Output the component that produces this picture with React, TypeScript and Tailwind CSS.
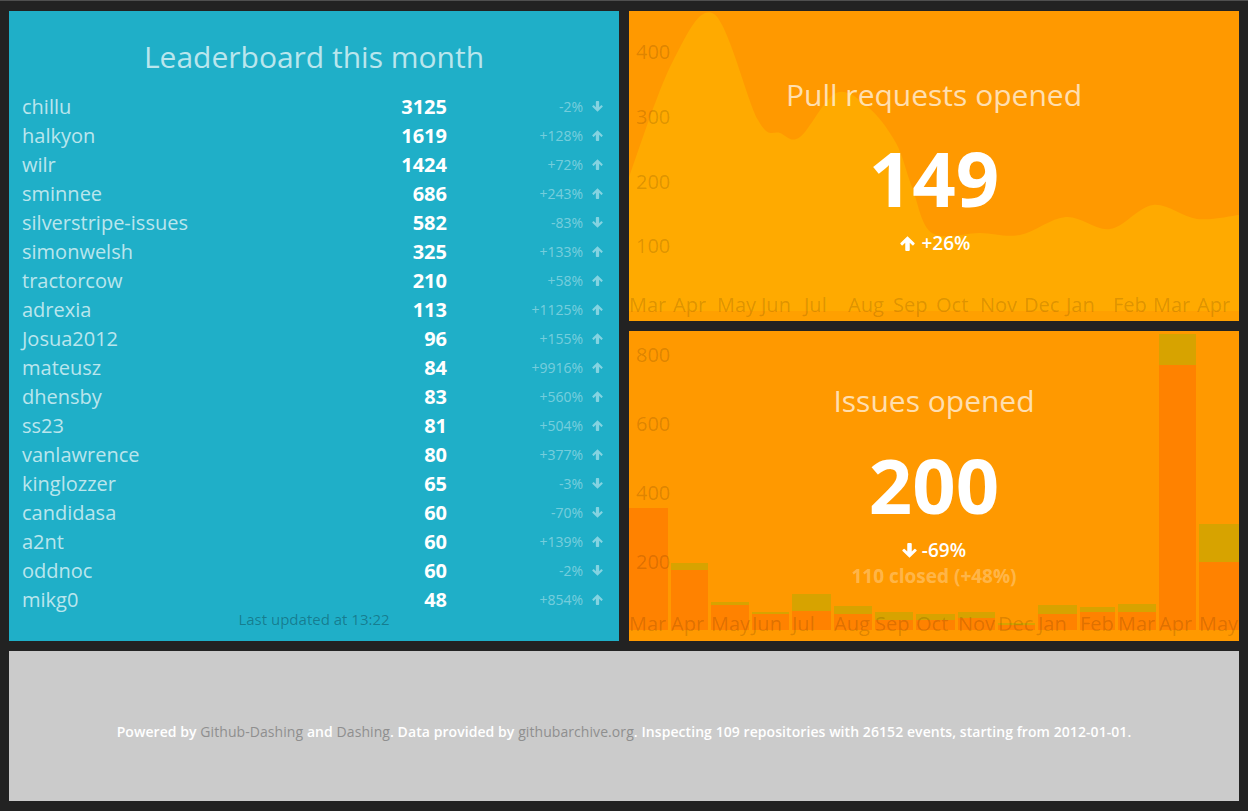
import React from "react";

type Pt = [number, number];

function smoothArea(pts: Pt[], base: number): string {
  let d = `M${pts[0][0]},${pts[0][1]}`;
  for (let i = 0; i < pts.length - 1; i++) {
    const p0 = pts[i - 1] || pts[i];
    const p1 = pts[i];
    const p2 = pts[i + 1];
    const p3 = pts[i + 2] || p2;
    const c1x = p1[0] + (p2[0] - p0[0]) / 6;
    const c1y = p1[1] + (p2[1] - p0[1]) / 6;
    const c2x = p2[0] - (p3[0] - p1[0]) / 6;
    const c2y = p2[1] - (p3[1] - p1[1]) / 6;
    d += ` C${c1x},${c1y} ${c2x},${c2y} ${p2[0]},${p2[1]}`;
  }
  const last = pts[pts.length - 1];
  d += ` L${last[0]},${base} L${pts[0][0]},${base} Z`;
  return d;
}

const pullPts: Pt[] = [
  [0, 166],
  [43, 52],
  [85, 3],
  [129, 109],
  [151, 122],
  [171, 126],
  [207, 82],
  [239, 96],
  [267, 132],
  [283, 176],
  [303, 222],
  [351, 222],
  [391, 224],
  [437, 206],
  [481, 218],
  [524, 194],
  [568, 208],
  [610, 204],
];

const pullX: [string, number][] = [
  ["Mar", 0],
  ["Apr", 44],
  ["May", 88],
  ["Jun", 132],
  ["Jul", 175],
  ["Aug", 219],
  ["Sep", 264],
  ["Oct", 307],
  ["Nov", 351],
  ["Dec", 395],
  ["Jan", 437],
  ["Feb", 484],
  ["Mar", 524],
  ["Apr", 568],
];

const issuesX: [string, number][] = [
  ["Mar", 0],
  ["Apr", 42],
  ["May", 82],
  ["Jun", 123],
  ["Jul", 163],
  ["Aug", 205],
  ["Sep", 246],
  ["Oct", 287],
  ["Nov", 329],
  ["Dec", 369],
  ["Jan", 409],
  ["Feb", 451],
  ["Mar", 489],
  ["Apr", 530],
  ["May", 570],
];

// [x, oliveTop, orangeTop]
const bars: [number, number, number][] = [
  [0, 177, 177],
  [42, 232, 239],
  [82, 271, 274],
  [123, 281, 283],
  [163, 263, 280],
  [205, 275, 283],
  [246, 281, 289],
  [287, 283, 289],
  [329, 281, 287],
  [369, 292, 294],
  [409, 274, 283],
  [451, 276, 281],
  [489, 273, 281],
  [530, 3, 34],
  [570, 193, 231],
];

const rows: [string, number, string, boolean][] = [
  ["chillu", 3125, "-2%", false],
  ["halkyon", 1619, "+128%", true],
  ["wilr", 1424, "+72%", true],
  ["sminnee", 686, "+243%", true],
  ["silverstripe-issues", 582, "-83%", false],
  ["simonwelsh", 325, "+133%", true],
  ["tractorcow", 210, "+58%", true],
  ["adrexia", 113, "+1125%", true],
  ["Josua2012", 96, "+155%", true],
  ["mateusz", 84, "+9916%", true],
  ["dhensby", 83, "+560%", true],
  ["ss23", 81, "+504%", true],
  ["vanlawrence", 80, "+377%", true],
  ["kinglozzer", 65, "-3%", false],
  ["candidasa", 60, "-70%", false],
  ["a2nt", 60, "+139%", true],
  ["oddnoc", 60, "-2%", false],
  ["mikg0", 48, "+854%", true],
];

function Arrow({ up, size, color }: { up: boolean; size: number; color: string }) {
  return (
    <svg
      width={size}
      height={size}
      viewBox="0 0 12 12"
      style={{ transform: up ? undefined : "rotate(180deg)" }}
      className="shrink-0"
    >
      <path
        d="M6 0.2 L11.6 5.6 Q12 6 11.6 6.4 L10.7 7.3 Q10.3 7.7 9.9 7.3 L7.8 5.3 V11.2 Q7.8 12 7 12 H5 Q4.2 12 4.2 11.2 V5.3 L2.1 7.3 Q1.7 7.7 1.3 7.3 L0.4 6.4 Q0 6 0.4 5.6 Z"
        fill={color}
      />
    </svg>
  );
}

const axisFill = "rgba(0,0,0,0.15)";

function Leaderboard() {
  return (
    <div className="row-span-2 bg-[#1fafc8] flex flex-col">
      <h1 className="mt-[28px] text-center text-[30px] leading-[36px] font-normal text-white/70">
        Leaderboard this month
      </h1>
      <ul className="mt-[17px] pl-[13px] pr-[16px]">
        {rows.map(([name, value, pct, up], i) => (
          <li key={i} className="flex h-[29px] items-center">
            <span className="flex-1 text-[20px] leading-[29px] text-white/70">{name}</span>
            <span className="text-[20px] leading-[29px] font-bold text-white text-right">{value}</span>
            <span className="w-[136px] text-right text-[14px] leading-[29px] text-white/40">{pct}</span>
            <span className="ml-[9px] flex w-[11px] items-center">
              <Arrow up={up} size={11} color="rgba(255,255,255,0.45)" />
            </span>
          </li>
        ))}
      </ul>
      <p className="-mt-[4px] text-center text-[15px] leading-[18px] text-black/30">
        Last updated at 13:22
      </p>
    </div>
  );
}

function PullPanel() {
  return (
    <div className="relative overflow-hidden bg-[#ff9900]">
      <svg className="absolute inset-0" width={610} height={310} viewBox="0 0 610 310">
        <rect x={0} y={300} width={610} height={10} fill="#ffa000" />
        <path d={smoothArea(pullPts, 300)} fill="#ffaa00" />
        {[
          ["400", 48],
          ["300", 113],
          ["200", 178],
          ["100", 242],
        ].map(([t, y]) => (
          <text key={t as string} x={7} y={y as number} fontSize={20} fill={axisFill}>
            {t}
          </text>
        ))}
        {pullX.map(([t, x], i) => (
          <text key={i} x={x} y={301} fontSize={20} fill={axisFill}>
            {t}
          </text>
        ))}
      </svg>
      <div className="relative flex flex-col items-center">
        <h2 className="mt-[66px] text-[30px] leading-[36px] font-normal text-white/70">
          Pull requests opened
        </h2>
        <p className="mt-[20px] text-[76px] leading-[90px] font-bold text-white">149</p>
        <p className="mt-[8px] ml-[3px] flex items-center gap-[6px] text-[19px] leading-[24px] font-semibold text-white">
          <Arrow up size={15} color="#ffffff" />
          <span>+26%</span>
        </p>
      </div>
    </div>
  );
}

function IssuesPanel() {
  return (
    <div className="relative overflow-hidden bg-[#ff9900]">
      <svg className="absolute inset-0" width={610} height={310} viewBox="0 0 610 310">
        {bars.map(([x, olive, orange], i) => {
          const next = i < bars.length - 1 ? bars[i + 1][0] - 3 : 610;
          const w = next - x;
          return (
            <g key={i}>
              <rect x={x} y={olive} width={w} height={299 - olive} fill="#d7a300" />
              <rect x={x} y={orange} width={w} height={299 - orange} fill="#ff8200" />
            </g>
          );
        })}
        {[
          ["800", 31],
          ["600", 100],
          ["400", 169],
          ["200", 238],
        ].map(([t, y]) => (
          <text key={t as string} x={7} y={y as number} fontSize={20} fill={axisFill}>
            {t}
          </text>
        ))}
        {issuesX.map(([t, x], i) => (
          <text key={i} x={x} y={300} fontSize={20} fill={axisFill}>
            {t}
          </text>
        ))}
      </svg>
      <div className="relative flex flex-col items-center">
        <h2 className="mt-[52px] text-[30px] leading-[36px] font-normal text-white/70">
          Issues opened
        </h2>
        <p className="mt-[21px] text-[76px] leading-[90px] font-bold text-white">200</p>
        <p className="mt-[8px] flex items-center gap-[5px] text-[19px] leading-[24px] font-semibold text-white">
          <Arrow up={false} size={15} color="#ffffff" />
          <span>-69%</span>
        </p>
        <p className="mt-[2px] text-[19px] leading-[24px] font-bold text-white/30">
          110 closed (+48%)
        </p>
      </div>
    </div>
  );
}

function Footer() {
  const link = "font-normal text-[#8f8f8f]";
  return (
    <div className="mt-[10px] h-[150px] bg-[#cbcbcb] pt-[71px] text-center text-[14px] leading-[20px] font-semibold tracking-[0.07px] text-white">
      Powered by <span className={link}>Github-Dashing</span> and{" "}
      <span className={link}>Dashing</span>. Data provided by{" "}
      <span className={link}>githubarchive.org</span>. Inspecting 109 repositories with 26152 events,
      starting from 2012-01-01.
    </div>
  );
}

export default function App() {
  return (
    <div className="h-[811px] w-[1248px] overflow-hidden border-t border-[#4f4f4f] bg-[#222222] px-[9px] pt-[10px] font-['Open_Sans',sans-serif]">
      <div className="grid grid-cols-[610px_610px] grid-rows-[310px_310px] gap-[10px]">
        <Leaderboard />
        <PullPanel />
        <IssuesPanel />
      </div>
      <Footer />
    </div>
  );
}
